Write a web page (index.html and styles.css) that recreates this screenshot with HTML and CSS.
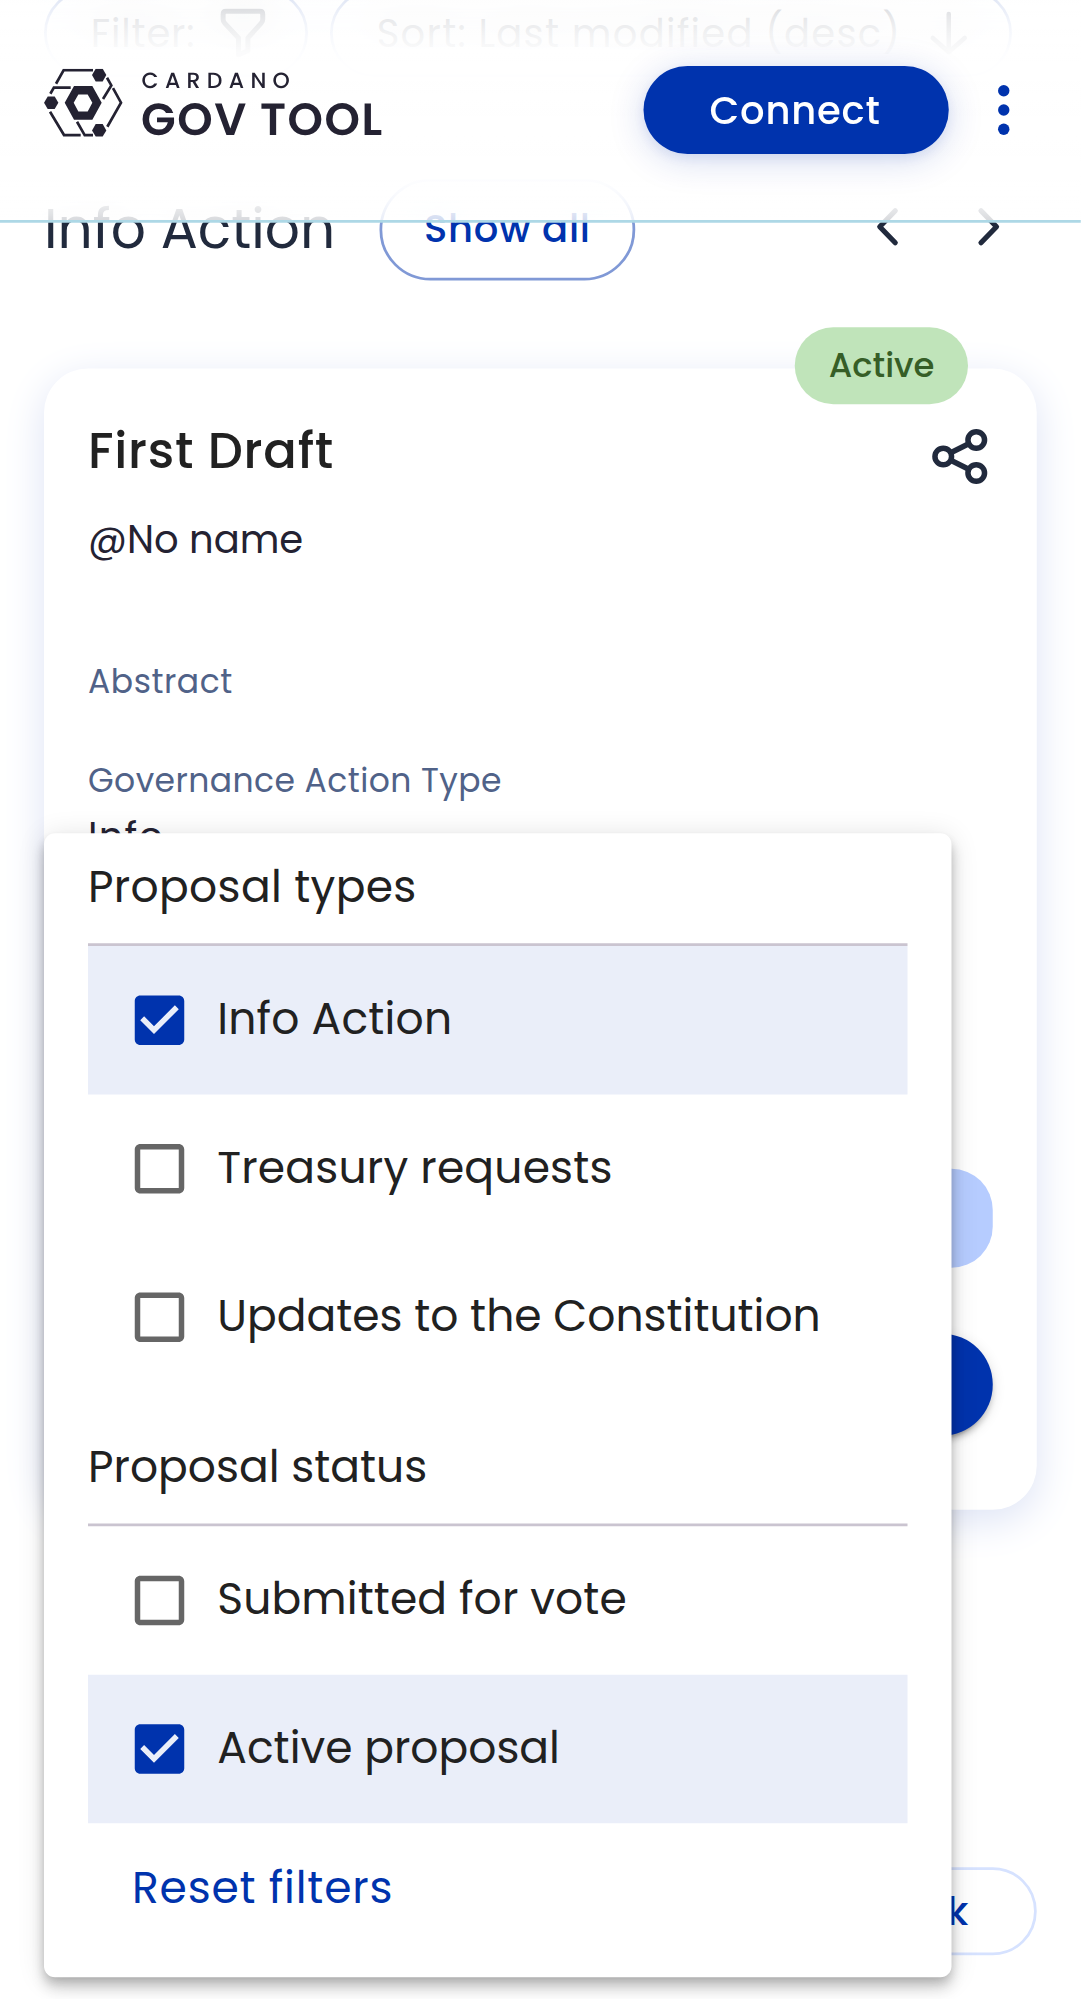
FILE: index.html
```html
<!DOCTYPE html>
<html lang="en">
<head>
<meta charset="utf-8">
<title>Cardano GovTool</title>
<link rel="stylesheet" href="styles.css">
</head>
<body>
<div class="screen">
<header class="header">
  <div class="logo">
    <svg class="logo-mark" viewBox="42 42 235 203" fill="none" stroke="#242232" stroke-width="8">
      <path d="M189 46H101L78 87M61 117L71.500 98.500H122M231 69L244 92L219 133M249 100L273 144L232 216M60 171L102 241H152M141 201L164 241H189"/>
      <g fill="#242232" stroke="none">
        <path d="M186 61L197 42H218L229 61L218 80H197Z"/>
        <path d="M42 144L53 125H74L85 144L74 163H53Z"/>
        <path d="M186 227L197 208H218L229 227L218 245H197Z"/>
        <path fill-rule="evenodd" d="M104 144L132 94H187L215 144L187 195H132ZM131 144L145 170H173L187 144L173 119H145Z"/>
      </g>
    </svg>
    <div class="logo-text">
      <span class="logo-top">CARDANO</span>
      <span class="logo-bottom">GOV TOOL</span>
    </div>
  </div>
  <button class="connect">Connect</button>
  <svg class="kebab" viewBox="0 0 66 66" fill="#0033ad"><circle cx="33" cy="13.700" r="5.700"/><circle cx="33" cy="33" r="5.700"/><circle cx="33" cy="52.300" r="5.700"/></svg>
</header>

<main class="page">
  <div class="toolbar">
    <button class="pill pill-filter">Filter:
      <svg class="funnel" viewBox="0 0 46 50" fill="none" stroke="#212a3d" stroke-width="5" stroke-linejoin="round"><path d="M6 3H40Q43 3 43 6V11Q43 13.500 41.500 15L28 30V43L18.500 47V30L4.500 15Q3 13.500 3 11V6Q3 3 6 3Z"/></svg>
    </button>
    <button class="pill pill-sort">Sort: Last modified (desc)
      <svg class="arrow" viewBox="0 0 38 44" fill="none" stroke="#212a3d" stroke-width="4.500" stroke-linecap="round" stroke-linejoin="round"><path d="M19 3V41M3 27L19 41L35 27"/></svg>
    </button>
  </div>

  <div class="section-head">
    <h2 class="section-title">Info Action</h2>
    <button class="show-all">Show all</button>
    <div class="arrows">
      <svg class="chevron" viewBox="0 0 66 66" fill="none" stroke="#212a3d" stroke-width="5.200" stroke-linecap="round" stroke-linejoin="round"><path d="M40 15.500L24.500 31.500L40 47.500"/></svg>
      <svg class="chevron" viewBox="0 0 66 66" fill="none" stroke="#212a3d" stroke-width="5.200" stroke-linecap="round" stroke-linejoin="round"><path d="M24 15.500L39.500 31.500L24 47.500"/></svg>
    </div>
  </div>

  <article class="card">
    <span class="badge">Active</span>
    <div class="card-head">
      <h3 class="card-title">First Draft</h3>
      <svg class="share" viewBox="0 0 66 66" fill="none" stroke="#212a3d" stroke-width="5.500"><circle cx="16.500" cy="33" r="8.300"/><circle cx="49.500" cy="16.500" r="8.300"/><circle cx="49.500" cy="49.500" r="8.300"/><path d="M24 29.200L42 20.300M24 36.800L42 45.700"/></svg>
    </div>
    <p class="author">@No name</p>
    <p class="label label-abstract">Abstract</p>
    <p class="label label-type">Governance Action Type</p>
    <p class="value">Info</p>
    <div class="status-bar"></div>
    <div class="details-button"></div>
  </article>

  <footer class="footer"><button class="feedback">Feedback</button></footer>
</main>

<section class="menu">
  <h4 class="group group-types">Proposal types</h4>
  <label class="option selected"><svg class="check" viewBox="0 0 24 24" fill="#0033ad"><path d="M19 3H5c-1.110 0-2 .9-2 2v14c0 1.100.89 2 2 2h14c1.110 0 2-.9 2-2V5c0-1.100-.89-2-2-2zm-9 14l-5-5 1.410-1.410L10 14.170l7.590-7.590L19 8l-9 9z"/></svg><span class="opt-wide">Info Action</span></label>
  <label class="option"><svg class="check" viewBox="0 0 24 24" fill="#666"><path d="M19 5v14H5V5h14m0-2H5c-1.100 0-2 .9-2 2v14c0 1.100.9 2 2 2h14c1.100 0 2-.9 2-2V5c0-1.100-.9-2-2-2z"/></svg><span class="opt-wide">Treasury requests</span></label>
  <label class="option"><svg class="check" viewBox="0 0 24 24" fill="#666"><path d="M19 5v14H5V5h14m0-2H5c-1.100 0-2 .9-2 2v14c0 1.100.9 2 2 2h14c1.100 0 2-.9 2-2V5c0-1.100-.9-2-2-2z"/></svg><span>Updates to the Constitution</span></label>
  <h4 class="group group-status">Proposal status</h4>
  <label class="option"><svg class="check" viewBox="0 0 24 24" fill="#666"><path d="M19 5v14H5V5h14m0-2H5c-1.100 0-2 .9-2 2v14c0 1.100.9 2 2 2h14c1.100 0 2-.9 2-2V5c0-1.100-.9-2-2-2z"/></svg><span class="opt-vote">Submitted for vote</span></label>
  <label class="option selected"><svg class="check" viewBox="0 0 24 24" fill="#0033ad"><path d="M19 3H5c-1.110 0-2 .9-2 2v14c0 1.100.89 2 2 2h14c1.110 0 2-.9 2-2V5c0-1.100-.89-2-2-2zm-9 14l-5-5 1.410-1.410L10 14.170l7.590-7.590L19 8l-9 9z"/></svg><span>Active proposal</span></label>
  <button class="reset">Reset filters</button>
</section>
</div>
</body>
</html>
```
FILE: styles.css
```css
* { box-sizing: border-box; }
html, body { margin: 0; padding: 0; }
body { height: 1999px; overflow: hidden; background: #fff; }

/* Phone-sized layout, enlarged as a whole */
.screen {
  display: flow-root;
  position: relative;
  width: 393.100px;
  height: 727px;
  transform: scale(2.75);
  transform-origin: 0 0;
  background: #fff;
  color: #212121;
  font-family: Poppins, Inter, sans-serif;
}
h2, h3, h4, p { margin: 0; font-weight: 400; }
button { border: 0; margin: 0; padding: 0; background: none; font-family: inherit; white-space: nowrap; }
svg { display: block; flex: none; }

/* Translucent sticky header */
.header {
  position: absolute;
  top: 0;
  left: 0;
  right: 0;
  z-index: 2;
  height: 81px;
  display: flex;
  align-items: flex-start;
  padding: 24px 16px 0;
  border-bottom: 1px solid #add8e6;
}
.header::before, .header::after { content: ""; position: absolute; inset: 0; z-index: -1; }
.header::before { backdrop-filter: blur(8px); opacity: .6; }
.header::after {
  background: linear-gradient(rgba(255,255,255,.74) 0, rgba(255,255,255,.8) 5px, rgba(255,255,255,.9) 14px, rgba(255,255,255,.96) 19px, rgba(255,255,255,.985) 24px, rgba(255,255,255,.99) 35px, rgba(255,255,255,.98) 64px, rgba(255,255,255,.88) 72px, rgba(255,255,255,.76) 80px);
}
.logo { display: flex; margin-top: 1px; }
.logo-mark { width: 28.500px; height: 24.600px; }
.logo-text { display: flex; flex-direction: column; margin: -.8px 0 0 6.800px; color: #242232; text-rendering: geometricPrecision; white-space: nowrap; }
.logo-top { font-size: 8px; line-height: 12px; font-weight: 500; letter-spacing: 2.300px; margin-left: .2px; }
.logo-bottom { font-size: 16.400px; line-height: 15.600px; font-weight: 600; letter-spacing: .56px; }
.connect {
  margin-left: auto;
  width: 111px;
  height: 32px;
  border-radius: 16px;
  background: #0033ad;
  color: #fff;
  font-size: 14px;
  line-height: 20px;
  font-weight: 500;
  letter-spacing: .29px;
  padding-right: 1px;
  box-shadow: 0 2px 13px rgba(0,51,173,.18), 0 1.500px 4px rgba(0,51,173,.08);
}
.kebab { width: 24px; height: 24px; margin: 4px 0 0 8px; }

/* Toolbar scrolled beneath the header */
.page { display: flow-root; padding: 0 16px; }
.toolbar { display: flex; gap: 8px; margin-top: -4px; }
.pill {
  display: flex;
  align-items: center;
  justify-content: space-between;
  height: 32px;
  padding: 0 14px 0 16px;
  border: 1px solid #6685ce;
  border-radius: 16px;
  color: #212a3d;
  font-size: 14px;
  line-height: 20px;
}
.pill-filter { width: 96px; letter-spacing: .3px; }
.pill-sort { width: 248px; padding-right: 15px; letter-spacing: .46px; }
.funnel { width: 16.700px; height: 18px; }
.arrow { width: 14px; height: 16px; }

.section-head { display: flex; align-items: center; margin-top: 37px; height: 37px; }
.section-title { width: 106px; font-size: 20px; line-height: 28px; padding-bottom: 1px; color: #212a3d; white-space: nowrap; }
.show-all {
  margin-left: 16px;
  width: 93px;
  height: 37px;
  padding-bottom: 1px;
  border: 1px solid #8099d6;
  border-radius: 18.500px;
  color: #0033ad;
  font-size: 14px;
  line-height: 20px;
  font-weight: 500;
  letter-spacing: .25px;
}
.arrows { display: flex; gap: 12.500px; margin: 0 5.600px 0 auto; padding-bottom: .6px; }
.chevron { width: 24px; height: 24px; }

/* Proposal card */
.card {
  position: relative;
  height: 415px;
  margin-top: 32px;
  padding: 18px 16px 0;
  border-radius: 16px;
  background: #fff;
  box-shadow: 0 4px 15px #dde3f5;
}
.badge {
  position: absolute;
  top: -15px;
  right: 25px;
  width: 63px;
  height: 28px;
  border-radius: 14px;
  background: #c0e4ba;
  color: #365e27;
  font-size: 12.300px;
  line-height: 28px;
  font-weight: 500;
  text-align: center;
}
.card-head { display: flex; justify-content: space-between; }
.card-title { font-size: 18px; line-height: 24px; font-weight: 500; letter-spacing: .27px; }
.share { width: 24px; height: 24px; margin-top: 2px; }
.author { margin-top: 8px; font-size: 14px; line-height: 20px; color: #242232; }
.label { font-size: 12px; line-height: 16px; color: #506288; }
.label-abstract { margin-top: 34px; letter-spacing: .2px; }
.label-type { margin-top: 20px; letter-spacing: .155px; }
.value { margin-top: 2px; font-size: 14px; line-height: 20px; letter-spacing: .45px; color: #242232; }
.status-bar { margin-top: 111px; height: 36px; border-radius: 15px; background: #b6ccff; }
.details-button {
  margin-top: 24px;
  height: 36.750px;
  border-radius: 18.400px;
  background: #0033ad;
  box-shadow: 0 3px 1px -2px rgba(0,0,0,.2), 0 2px 2px rgba(0,0,0,.14), 0 1px 5px rgba(0,0,0,.12);
}
.footer { display: flex; justify-content: flex-end; margin-top: 130px; }
.feedback {
  height: 32px;
  padding: 0 24px;
  border: 1px solid #d6e2ff;
  border-radius: 16px;
  color: #0033ad;
  font-size: 14px;
  font-weight: 500;
}

/* Filter menu */
.menu {
  position: absolute;
  top: 303px;
  left: 16px;
  z-index: 3;
  width: 330px;
  height: 416px;
  padding: 8px 16px 0;
  border-radius: 4px;
  background: #fff;
  box-shadow: 0 2px 4px -1px rgba(0,0,0,.2), 0 4px 5px rgba(0,0,0,.14), 0 1px 10px rgba(0,0,0,.12);
}
.group { font-size: 16px; line-height: 24px; padding-bottom: 8px; border-bottom: 1px solid #cac4d0; }
.group-types { letter-spacing: .12px; }
.group-status { margin-top: 16px; }
.option { display: flex; align-items: center; gap: 9px; height: 54px; padding-left: 14px; font-size: 16px; line-height: 24px; white-space: nowrap; }
.selected { background: #eaeef9; }
.check { width: 24px; height: 24px; }
.opt-wide { letter-spacing: .07px; }
.opt-vote { letter-spacing: .04px; }
.reset { display: block; margin: 12px 0 0 16px; color: #0033ad; font-size: 16px; line-height: 24px; letter-spacing: .29px; }
```
